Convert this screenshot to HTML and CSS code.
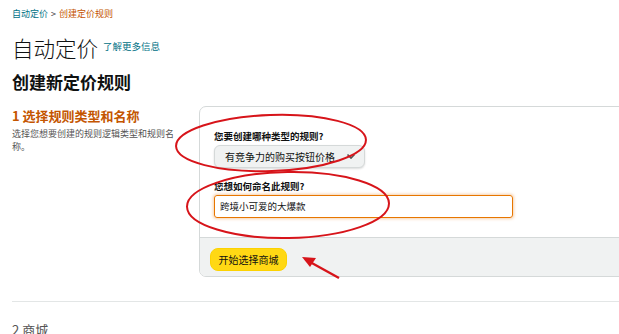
FILE: index.html
```html
<!DOCTYPE html>
<html lang="zh-CN">
<head>
  <meta charset="UTF-8">
  <title>创建定价规则</title>
  <link rel="stylesheet" href="styles.css">
</head>
<body>
<div class="page">
  <div class="crumb">
    <a href="#" class="crumb-link">自动定价</a>
    <span class="crumb-sep">&gt;</span>
    <span class="crumb-cur">创建定价规则</span>
  </div>

  <div class="head">
    <h1>自动定价</h1>
    <a href="#" class="more">了解更多信息</a>
  </div>
  <h2>创建新定价规则</h2>

  <div class="step">
    <div class="step-side">
      <h3>1 选择规则类型和名称</h3>
      <p>选择您想要创建的规则逻辑类型和规则名称。</p>
    </div>
    <div class="box">
      <div class="box-body">
        <label class="lbl">您要创建哪种类型的规则?</label>
        <div class="select">
          <span>有竞争力的购买按钮价格</span>
          <svg width="10" height="7" viewBox="0 0 10 7"><path d="M1.5 1.5 L5 5 L8.5 1.5" fill="none" stroke="#555" stroke-width="1.6"/></svg>
        </div>
        <label class="lbl lbl2">您想如何命名此规则?</label>
        <div class="input">跨境小可爱的大爆款</div>
      </div>
      <div class="box-foot">
        <button class="go">开始选择商城</button>
      </div>
    </div>
  </div>

  <hr class="rule">
  <div class="step2">2 商城</div>
</div>

<!-- 红色标注 -->
<svg class="marks" width="619" height="334" viewBox="0 0 619 334">
  <ellipse cx="271" cy="143" rx="95" ry="28" fill="none" stroke="#d7141a" stroke-width="2" transform="rotate(-2 271 143)"/>
  <ellipse cx="288" cy="205" rx="101" ry="33" fill="none" stroke="#d7141a" stroke-width="2" transform="rotate(-1 288 205)"/>
  <line x1="339" y1="278" x2="310" y2="262" stroke="#d7141a" stroke-width="2.2"/>
  <polygon points="302,257 316,258 310,267" fill="#d7141a"/>
</svg>
</body>
</html>
```

FILE: styles.css
```css
*{
  margin: 0;
  padding: 0;
  box-sizing: border-box;
}
body{
  font-family: "Noto Sans CJK SC", "Noto Sans", sans-serif;
  color: #0f1111;
  background: #fff;
  overflow: hidden;
}
.page{
  padding: 7px 0 0 12px;
  position: relative;
}
a{
  text-decoration: none;
}
.crumb{
  font-size: 9px;
  line-height: 14px;
  display: flex;
  gap: 3px;
}
.crumb-link{
  color: #007185;
}
.crumb-sep{
  color: #333;
}
.crumb-cur{
  color: #c45500;
}
.head{
  display: flex;
  align-items: flex-end;
  gap: 5px;
  margin-top: 13px;
}
h1{
  font-size: 21.5px;
  font-weight: 300;
  line-height: 28px;
}
.more{
  font-size: 9.5px;
  color: #007185;
  line-height: 14px;
  margin-bottom: 9px;
}
h2{
  font-size: 17px;
  font-weight: 700;
  line-height: 24px;
  margin-top: 8px;
}
.step{
  display: flex;
  margin-top: 12px;
}
.step-side{
  width: 187px;
  padding-top: 1px;
}
.step-side h3{
  font-size: 13px;
  font-weight: 700;
  color: #c45500;
  line-height: 17px;
}
.step-side p{
  font-size: 9px;
  color: #555;
  line-height: 13px;
  margin-top: 3px;
  padding-right: 14px;
}
.box{
  flex: 1;
  margin-right: -20px;
  border: 1px solid #d5d9d9;
  border-radius: 7px;
  overflow: hidden;
  height: 171px;
}
.box-body{
  padding: 23px 0 0 14px;
  height: 130px;
}
.lbl{
  display: block;
  font-size: 9.5px;
  font-weight: 700;
  line-height: 13px;
}
.lbl2{
  margin-top: 12px;
}
.select{
  margin-top: 2px;
  width: 151px;
  height: 23px;
  background: #f0f2f2;
  border: 1px solid #d5d9d9;
  border-radius: 6px;
  box-shadow: 0 1px 2px rgba(15,17,17,.15);
  display: flex;
  align-items: center;
  justify-content: space-between;
  padding: 0 8px 0 10px;
  font-size: 10px;
}
.input{
  margin-top: 2px;
  width: 299px;
  height: 23px;
  border: 1px solid #e77600;
  border-radius: 3px;
  box-shadow: 0 0 3px 1px rgba(228,121,17,.35);
  font-size: 9.5px;
  line-height: 21px;
  padding-left: 5px;
}
.box-foot{
  background: #f0f2f2;
  border-top: 1px solid #d5d9d9;
  height: 41px;
  padding: 7px 0 0 10px;
}
.go{
  width: 77px;
  height: 23px;
  background: #ffd814;
  border: 1px solid #fcd200;
  border-radius: 8px;
  font-family: inherit;
  font-size: 10px;
  color: #0f1111;
}
.rule{
  border: 0;
  border-top: 1px solid #e3e6e6;
  margin-top: 24px;
}
.step2{
  font-size: 13px;
  color: #555;
  margin-top: 19px;
  line-height: 17px;
}
.marks{
  position: absolute;
  left: 0;
  top: 0;
  pointer-events: none;
}
```
